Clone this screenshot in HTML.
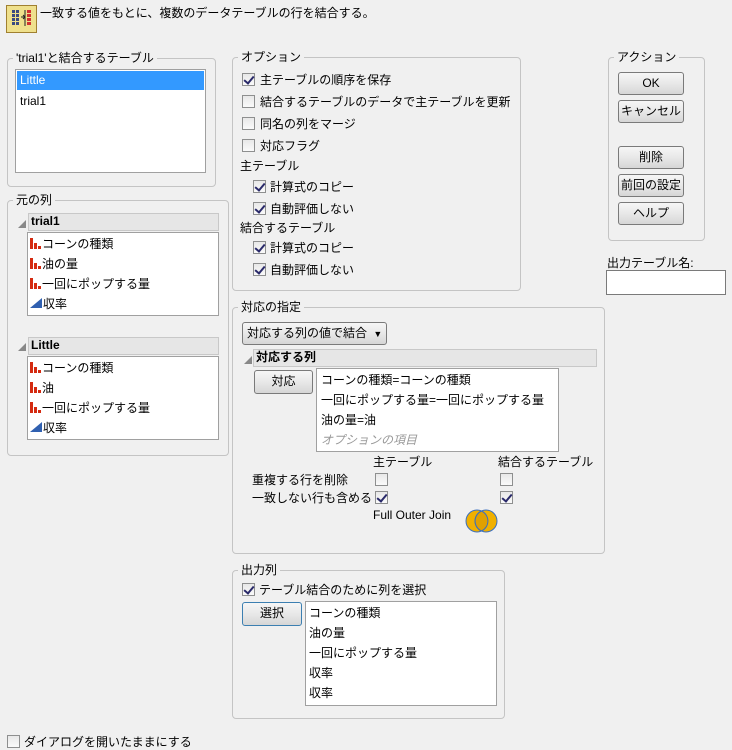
<!DOCTYPE html>
<html><head><meta charset="utf-8"><style>
*{box-sizing:border-box;margin:0;padding:0}
body{width:732px;height:750px;background:#f0f0f0;font-family:"Liberation Sans","Noto Sans CJK JP",sans-serif;font-size:12px;color:#000;position:relative;overflow:hidden}
.a{position:absolute;white-space:nowrap}
.box{position:absolute;border:1px solid #c4c4c4;border-radius:4px}
.lg{position:absolute;background:#f0f0f0;padding:0 3px;top:-9px;left:5px;line-height:16px}
.list{position:absolute;background:#fff;border:1px solid #a0a0a0}
.cb{position:absolute;width:13px;height:13px;border:1px solid #8e8f8f;background:linear-gradient(#e8e8e8,#fafafa)}
.cb.on::after{content:"";position:absolute;left:3px;top:0px;width:4px;height:8px;border:solid #2a2a6a;border-width:0 2px 2px 0;transform:rotate(40deg)}
.btn{position:absolute;border:1px solid #7a7a7a;border-radius:3px;background:linear-gradient(#f6f6f6 0%,#e8e8e8 50%,#d6d6d6 100%);text-align:center;line-height:20px}
.hdr{position:absolute;background:#e6e6e6;border:1px solid #c8c8c8;font-weight:bold;line-height:15px;padding-left:2px}
.tri{position:absolute;width:0;height:0;border-left:8px solid transparent;border-bottom:8px solid #888}
.ni{display:inline-block;width:11px;height:11px;position:relative;vertical-align:-1px;margin-right:1px}
.ni i{position:absolute;bottom:0;background:#d42a10;width:3px}
.ci{display:inline-block;width:0;height:0;border-left:12px solid transparent;border-bottom:10px solid #3060b0;vertical-align:0px;margin-right:1px}
</style></head><body>

<div class="a" style="left:6px;top:5px;width:31px;height:28px;border:1px solid #a08030;background:#efe08c"></div>
<svg class="a" style="left:10px;top:9px" width="24" height="20"><g fill="#3a4a80"><rect x="2" y="1" width="3" height="3"/><rect x="6" y="1" width="3" height="3"/><rect x="2" y="5" width="3" height="3"/><rect x="6" y="5" width="3" height="3"/><rect x="2" y="9" width="3" height="3"/><rect x="6" y="9" width="3" height="3"/><rect x="2" y="13" width="3" height="3"/><rect x="6" y="13" width="3" height="3"/></g><g fill="#d03030"><rect x="17" y="1" width="4" height="3"/><rect x="17" y="5" width="4" height="3"/><rect x="17" y="9" width="4" height="3"/><rect x="17" y="13" width="4" height="3"/></g><path d="M11 8h4M13 6l2 2-2 2M15 1v16" stroke="#222" fill="none"/></svg>
<div class="a" style="left:40px;top:4px">一致する値をもとに、複数のデータテーブルの行を結合する。</div>

<div class="box" style="left:7px;top:58px;width:209px;height:129px"><div class="lg">'trial1'と結合するテーブル</div></div>
<div class="list" style="left:15px;top:69px;width:191px;height:104px">
<div style="background:#3399ff;color:#fff;margin:1px;height:19px;line-height:19px;padding-left:3px">Little</div>
<div style="line-height:20px;padding-left:4px">trial1</div></div>

<div class="box" style="left:7px;top:200px;width:222px;height:256px"><div class="lg">元の列</div></div>
<div class="tri" style="left:18px;top:220px"></div>
<div class="hdr" style="left:28px;top:213px;width:191px;height:18px">trial1</div>
<div class="list" style="left:27px;top:232px;width:192px;height:84px;line-height:20px;padding:1px 2px">
<div><span class="ni"><i style="left:0;height:11px"></i><i style="left:4px;height:6px"></i><i style="left:8px;height:3px"></i></span>コーンの種類</div>
<div><span class="ni"><i style="left:0;height:11px"></i><i style="left:4px;height:6px"></i><i style="left:8px;height:3px"></i></span>油の量</div>
<div><span class="ni"><i style="left:0;height:11px"></i><i style="left:4px;height:6px"></i><i style="left:8px;height:3px"></i></span>一回にポップする量</div>
<div><span class="ci"></span>収率</div></div>
<div class="tri" style="left:18px;top:343px"></div>
<div class="hdr" style="left:28px;top:337px;width:191px;height:18px">Little</div>
<div class="list" style="left:27px;top:356px;width:192px;height:84px;line-height:20px;padding:1px 2px">
<div><span class="ni"><i style="left:0;height:11px"></i><i style="left:4px;height:6px"></i><i style="left:8px;height:3px"></i></span>コーンの種類</div>
<div><span class="ni"><i style="left:0;height:11px"></i><i style="left:4px;height:6px"></i><i style="left:8px;height:3px"></i></span>油</div>
<div><span class="ni"><i style="left:0;height:11px"></i><i style="left:4px;height:6px"></i><i style="left:8px;height:3px"></i></span>一回にポップする量</div>
<div><span class="ci"></span>収率</div></div>

<div class="box" style="left:232px;top:57px;width:289px;height:234px"><div class="lg">オプション</div></div>
<div class="cb on" style="left:242px;top:73px"></div><div class="a" style="left:260px;top:71px">主テーブルの順序を保存</div>
<div class="cb" style="left:242px;top:95px"></div><div class="a" style="left:260px;top:93px">結合するテーブルのデータで主テーブルを更新</div>
<div class="cb" style="left:242px;top:117px"></div><div class="a" style="left:260px;top:115px">同名の列をマージ</div>
<div class="cb" style="left:242px;top:139px"></div><div class="a" style="left:260px;top:137px">対応フラグ</div>
<div class="a" style="left:240px;top:157px">主テーブル</div>
<div class="cb on" style="left:253px;top:180px"></div><div class="a" style="left:270px;top:178px">計算式のコピー</div>
<div class="cb on" style="left:253px;top:202px"></div><div class="a" style="left:270px;top:200px">自動評価しない</div>
<div class="a" style="left:240px;top:219px">結合するテーブル</div>
<div class="cb on" style="left:253px;top:241px"></div><div class="a" style="left:270px;top:239px">計算式のコピー</div>
<div class="cb on" style="left:253px;top:263px"></div><div class="a" style="left:270px;top:261px">自動評価しない</div>

<div class="box" style="left:608px;top:57px;width:97px;height:184px"><div class="lg">アクション</div></div>
<div class="btn" style="left:618px;top:72px;width:66px;height:23px">OK</div>
<div class="btn" style="left:618px;top:100px;width:66px;height:23px">キャンセル</div>
<div class="btn" style="left:618px;top:146px;width:66px;height:23px">削除</div>
<div class="btn" style="left:618px;top:174px;width:66px;height:23px">前回の設定</div>
<div class="btn" style="left:618px;top:202px;width:66px;height:23px">ヘルプ</div>
<div class="a" style="left:607px;top:254px">出力テーブル名:</div>
<div class="a" style="left:606px;top:270px;width:120px;height:25px;background:#fff;border:1px solid #7a7a7a"></div>

<div class="box" style="left:232px;top:307px;width:373px;height:247px"><div class="lg">対応の指定</div></div>
<div class="btn" style="left:242px;top:322px;width:145px;height:23px;text-align:left;padding-left:4px">対応する列の値で結合 <span style="font-size:9px;margin-left:3px">▼</span></div>
<div class="tri" style="left:244px;top:356px"></div>
<div class="hdr" style="left:253px;top:349px;width:344px;height:18px">対応する列</div>
<div class="btn" style="left:254px;top:370px;width:59px;height:24px">対応</div>
<div class="list" style="left:316px;top:368px;width:243px;height:84px;line-height:20px;padding:1px 4px">
<div>コーンの種類=コーンの種類</div><div>一回にポップする量=一回にポップする量</div><div>油の量=油</div><div style="color:#999;font-style:italic">オプションの項目</div></div>
<div class="a" style="left:373px;top:453px">主テーブル</div>
<div class="a" style="left:498px;top:453px">結合するテーブル</div>
<div class="a" style="left:252px;top:471px">重複する行を削除</div>
<div class="cb" style="left:375px;top:473px"></div><div class="cb" style="left:500px;top:473px"></div>
<div class="a" style="left:252px;top:489px">一致しない行も含める</div>
<div class="cb on" style="left:375px;top:491px"></div><div class="cb on" style="left:500px;top:491px"></div>
<div class="a" style="left:373px;top:508px">Full Outer Join</div>
<svg class="a" style="left:465px;top:508px" width="34" height="26"><circle cx="12" cy="13" r="11" fill="#f0b000" stroke="#3a6fc0"/><circle cx="21" cy="13" r="11" fill="#f0b000" stroke="#3a6fc0"/><path d="M16.5 3a11 11 0 0 1 0 20a11 11 0 0 1 0-20z" fill="#e0a000" stroke="#3a6fc0"/></svg>

<div class="box" style="left:232px;top:570px;width:273px;height:149px"><div class="lg">出力列</div></div>
<div class="cb on" style="left:242px;top:583px"></div><div class="a" style="left:259px;top:581px">テーブル結合のために列を選択</div>
<div class="btn" style="left:242px;top:602px;width:60px;height:24px;border-color:#3c7fb1">選択</div>
<div class="list" style="left:305px;top:601px;width:192px;height:105px;line-height:20px;padding:1px 3px">
<div>コーンの種類</div><div>油の量</div><div>一回にポップする量</div><div>収率</div><div>収率</div></div>

<div class="cb" style="left:7px;top:735px"></div><div class="a" style="left:24px;top:733px">ダイアログを開いたままにする</div>
</body></html>
